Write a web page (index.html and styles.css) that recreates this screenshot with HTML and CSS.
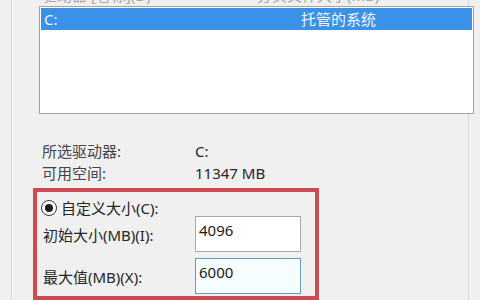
FILE: index.html
```html
<!DOCTYPE html>
<html lang="zh-CN">
<head>
    <meta charset="UTF-8">
    <meta name="viewport" content="width=device-width, initial-scale=1.0">
    <title>虚拟内存</title>
    <link rel="stylesheet" href="styles.css">
</head>
<body>
    <div class="group">
        <div class="columns">
            <span class="col-drive">驱动器 [卷标](D)</span>
            <span class="col-size">分页文件大小(MB)</span>
        </div>

        <div class="drive-list">
            <div class="drive-row selected">
                <span>C:</span>
                <span>托管的系统</span>
            </div>
        </div>

        <div class="info">
            <div class="info-row">
                <span class="info-label">所选驱动器:</span>
                <span>C:</span>
            </div>
            <div class="info-row">
                <span class="info-label">可用空间:</span>
                <span>11347 MB</span>
            </div>
        </div>

        <div class="custom-box">
            <div class="radio-row">
                <span class="radio checked"></span>
                <span>自定义大小(C):</span>
            </div>
            <div class="size-row">
                <span class="size-label">初始大小(MB)(I):</span>
                <div class="field">4096</div>
            </div>
            <div class="size-row">
                <span class="size-label">最大值(MB)(X):</span>
                <div class="field focused">6000</div>
            </div>
        </div>
    </div>
</body>
</html>
```

FILE: styles.css
```css
body {
    margin: 0;
    width: 480px;
    height: 300px;
    overflow: hidden;
    background: #f0f0f0;
    font-family: "Noto Sans", "Noto Sans CJK SC", sans-serif;
    font-size: 15px;
    color: #262626;
}

.group {
    margin-left: 11px;
    width: 456px;
    height: 300px;
    border-left: 1px solid #d6d6d6;
    border-right: 1px solid #d6d6d6;
    box-shadow: 1px 0 0 #fafafa inset;
}

/* column headers, mostly cut off by the top edge */
.columns {
    height: 6px;
    overflow: hidden;
    display: flex;
    align-items: flex-end;
    color: #a8a8a8;
}

.columns span {
    line-height: 15px;
    margin-bottom: 3px;
    white-space: nowrap;
}

.col-drive {
    margin-left: 30px;
    width: 215px;
}

.drive-list {
    margin-left: 27px;
    width: 435px;
    height: 108px;
    box-sizing: border-box;
    border: 1px solid #a2a2a2;
    background: #fff;
    padding: 1px;
}

.drive-row {
    display: grid;
    grid-template-columns: 257px 1fr;
    height: 22px;
    line-height: 22px;
    padding-left: 3px;
}

.drive-row.selected {
    background: #3b90e8;
    color: #eef6ff;
}

.info {
    margin-top: 26px;
    margin-left: 30px;
}

.info-row {
    display: flex;
    height: 22px;
    line-height: 22px;
}

.info-label {
    width: 153px;
    color: #444;
}

.custom-box {
    margin-top: 4px;
    margin-left: 21px;
    width: 286px;
    height: 112px;
    box-sizing: border-box;
    border: 4px solid #cc4a50;
    padding: 8px 0 0 4px;
}

.radio-row {
    display: flex;
    align-items: center;
    gap: 4px;
    height: 16px;
    line-height: 16px;
}

.radio {
    width: 16px;
    height: 16px;
    box-sizing: border-box;
    border: 1px solid #3a3a3a;
    border-radius: 50%;
    background: #fff;
    display: flex;
    align-items: center;
    justify-content: center;
}

.radio.checked::after {
    content: "";
    width: 8px;
    height: 8px;
    border-radius: 50%;
    background: #1e1e1e;
}

.size-row {
    display: flex;
    align-items: center;
    height: 36px;
}

.size-row + .size-row {
    margin-top: 6px;
}

.size-label {
    width: 152px;
    padding-left: 2px;
}

.field {
    width: 106px;
    height: 36px;
    box-sizing: border-box;
    border: 1px solid #a8a8a8;
    background: #fff;
    padding: 3px 0 0 3px;
    line-height: 20px;
    color: #1a1a1a;
}

.field.focused {
    border-color: #5f9fbe;
    background: #f6fdff;
}
```
